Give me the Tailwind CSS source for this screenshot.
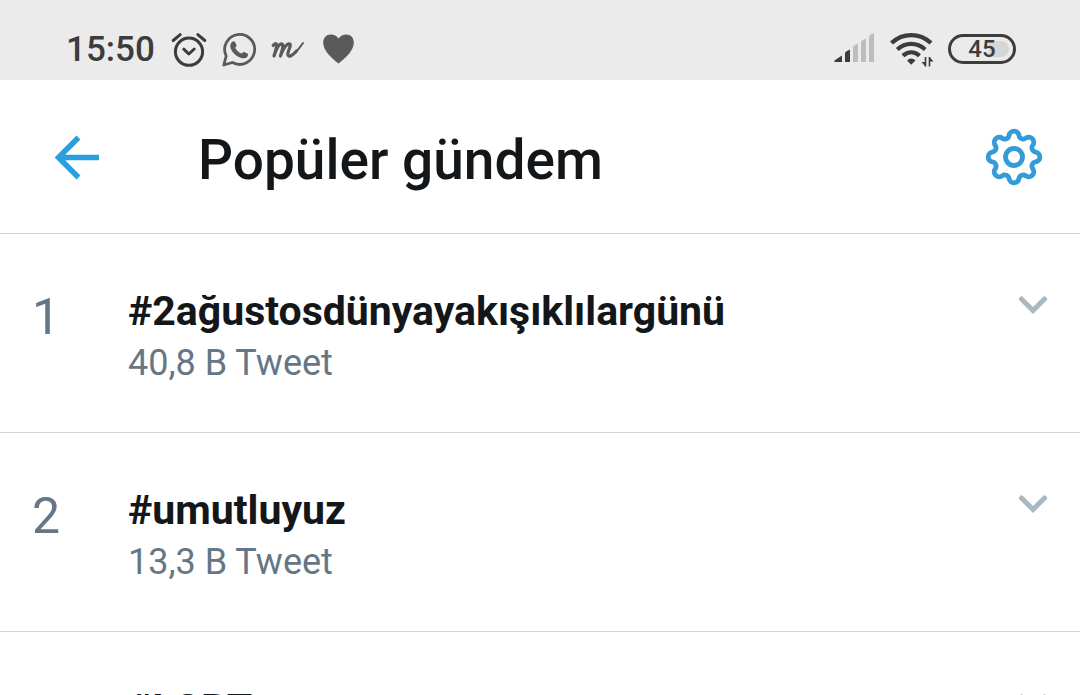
<!DOCTYPE html>
<html lang="tr">
<head>
    <meta charset="UTF-8">
    <meta name="viewport" content="width=device-width, initial-scale=1.0">
    <title>Popüler gündem</title>
    <script src="https://cdn.jsdelivr.net/npm/@tailwindcss/browser@4"></script>
</head>
<body class="h-screen overflow-hidden bg-white font-[Roboto,sans-serif] text-[#14171a]">
    <!-- Status bar -->
    <div class="flex h-20 items-end justify-between bg-[#ebebeb] pr-16 pl-[66px] pb-3 text-[#3c3c3c]">
        <div class="flex items-center">
            <span class="text-[35px] leading-9 font-medium">15:50</span>
            <!-- Alarm -->
            <svg class="ml-4 h-9 w-9" viewBox="0 0 36 36" fill="none" stroke="currentColor" stroke-width="3" stroke-linecap="round" stroke-linejoin="round">
                <circle cx="18" cy="19.7" r="13.6" />
                <path d="M2.200 8.500l7-5.800M33.800 8.500l-7-5.800M12.800 17.200l5 4.800 5.400-5" />
            </svg>
            <!-- WhatsApp -->
            <svg class="ml-3.5 h-9 w-9 text-[#5a5a5a]" viewBox="0 0 36 36" fill="none" stroke="currentColor" stroke-width="2.8" stroke-linejoin="round">
                <path d="M2.800 33l2.400-9A15 15 0 1 1 11.400 30.500z" />
                <path d="M10.900 10.100c1.200-1.200 2.600-1.200 3.200.1l1.400 3c.4 1-1 1.900-1.300 2.600 1.300 2.700 3.400 4.500 6.200 5.700.9-.3 1.700-1.900 2.800-1.500l3.200 1.500c1.200.7.7 2.500-.3 3.400-2.400 2.100-5.400 1.600-8.400.1-3.500-1.700-6.500-4.700-7.900-8.200-1-2.600-.6-5 1.100-6.700z" fill="currentColor" stroke="none" />
            </svg>
            <!-- App logo -->
            <svg class="ml-3 h-9 w-9 text-[#5a5a5a]" viewBox="0 0 36 36" fill="none" stroke="currentColor" stroke-width="3.200" stroke-linecap="round" stroke-linejoin="round">
                <path d="M4.200 13.500C6 11 8 11 7.700 13.800 7.300 17 5.800 21 5 24 6.800 18.500 9.500 11.800 12.400 11.800c3 0 .6 7-1 12.200C13.500 18.500 16.800 11.800 20 11.800c3.600 0-1.500 7.500-1.200 10.400.4 4 5 1.200 8.700-3.200" />
                <path d="M25 21.500Q29.500 18 34 11" stroke-width="2" />
            </svg>
            <!-- Heart -->
            <svg class="ml-4 h-9 w-9 text-[#5a5a5a]" viewBox="0 0 36 36" fill="currentColor">
                <path d="M17.500 6.500C19.500 3.800 22 2.600 25 2.600c5 0 7.800 3.400 7.800 8.200 0 7.500-7.500 15-15.300 20.700C9.700 25.800 2.200 18.300 2.200 10.800c0-4.800 3-8.200 7.800-8.200 3 0 5.700 1.200 7.500 3.900z" />
            </svg>
        </div>
        <div class="flex items-center pb-px">
            <!-- Signal -->
            <svg class="h-9 w-10" viewBox="0 2 40 36" fill="currentColor">
                <path d="M.5 33q-.6-1.500 1-2.300L8 26.500V33zM11 24l1-1.500 4-2V33h-5z" />
                <path d="M19 18l1-1.500 4-2V33h-5zM27 13l1-1.500 4-2V33h-5zM35 8q1-2.800 5-4V33h-5z" fill="#bdbdbd" />
            </svg>
            <!-- Wifi -->
            <svg class="ml-4 h-9 w-11" viewBox="0 2 44 36" fill="none" stroke="currentColor" stroke-width="4.300">
                <path d="M1.500 14C13 3.500 29.500 3.500 41 14M7.300 20.500C15.500 13 27 13 35.200 20.500M13 26.800c5-4.700 11.500-4.700 16.500 0" />
                <path d="M17 31.500c2.500-2.700 6-2.700 8.500 0l-4.300 4.200z" fill="currentColor" stroke="none" />
                <path d="M35.500 28v9.500M39.500 28v9.500" stroke-width="1.600" />
                <path d="M31.500 33h4v4.500zM39.500 28v4.500h4z" fill="currentColor" stroke="none" />
            </svg>
            <!-- Battery -->
            <div class="relative ml-3.5 flex h-[30px] w-[68px] items-center justify-center rounded-full border-3 border-[#3c3c3c]">
                <span class="absolute top-1 right-1 h-4 w-5 rounded-r-full bg-[#d6d6d6]"></span>
                <span class="relative text-[24px] leading-6 font-medium">45</span>
            </div>
        </div>
    </div>

    <!-- Title bar -->
    <header class="flex h-[154px] items-center border-b border-[#d0d5d6] pr-9 pl-[54px]">
        <button type="button" aria-label="Geri" class="text-[#2a9fe0]">
            <svg class="h-12 w-12" viewBox="0 0 48 48" fill="none" stroke="currentColor" stroke-width="5.500">
                <path d="M45 24.500H5M24.500 4.500l-20 20 20 20" />
            </svg>
        </button>
        <h1 class="ml-24 flex-1 pt-1.5 text-[55px] leading-16 font-medium">Popüler gündem</h1>
        <button type="button" aria-label="Ayarlar" class="text-[#339bd8]">
            <svg class="h-15 w-15" viewBox="-30 -30 60 60" fill="none" stroke="currentColor" stroke-width="4.800">
                <circle r="8.500" />
                <path d="M-4.940-21.630A5 5 0 0 1 4.940-21.630A4.300 4.300 0 0 0 11.800-18.790A5 5 0 0 1 18.790-11.800A4.300 4.300 0 0 0 21.630-4.940A5 5 0 0 1 21.630 4.940A4.300 4.300 0 0 0 18.790 11.800A5 5 0 0 1 11.800 18.790A4.300 4.300 0 0 0 4.940 21.630A5 5 0 0 1-4.940 21.630A4.300 4.300 0 0 0-11.800 18.790A5 5 0 0 1-18.790 11.800A4.300 4.300 0 0 0-21.630 4.940A5 5 0 0 1-21.630-4.940A4.300 4.300 0 0 0-18.790-11.800A5 5 0 0 1-11.800-18.790A4.300 4.300 0 0 0-4.940-21.630z" />
            </svg>
        </button>
    </header>

    <!-- Trend list -->
    <ol>
        <li class="flex h-[199px] items-start border-b border-[#d0d5d6] pt-[51px] pr-8 pl-8">
            <span class="w-24 pt-1 text-[50px] leading-14 text-[#657786]">1</span>
            <div class="flex-1">
                <h2 class="text-[41px] leading-[52px] font-bold">#2ağustosdünyayakışıklılargünü</h2>
                <p class="text-[36px] leading-[52px] text-[#657786]">40,8 B Tweet</p>
            </div>
            <button type="button" aria-label="Diğer seçenekler" class="pt-1 text-[#aab8c2]">
                <svg class="h-8 w-8" viewBox="0 0 32 32" fill="none" stroke="currentColor" stroke-width="5" stroke-linecap="round">
                    <path d="M5.500 10L17 21.500 28.500 10" />
                </svg>
            </button>
        </li>
        <li class="flex h-[199px] items-start border-b border-[#d0d5d6] pt-[51px] pr-8 pl-8">
            <span class="w-24 pt-1 text-[50px] leading-14 text-[#657786]">2</span>
            <div class="flex-1">
                <h2 class="text-[41px] leading-[52px] font-bold">#umutluyuz</h2>
                <p class="text-[36px] leading-[52px] text-[#657786]">13,3 B Tweet</p>
            </div>
            <button type="button" aria-label="Diğer seçenekler" class="pt-1 text-[#aab8c2]">
                <svg class="h-8 w-8" viewBox="0 0 32 32" fill="none" stroke="currentColor" stroke-width="5" stroke-linecap="round">
                    <path d="M5.500 10L17 21.500 28.500 10" />
                </svg>
            </button>
        </li>
        <li class="flex h-[199px] items-start border-b border-[#d0d5d6] pt-[51px] pr-8 pl-8">
            <span class="w-24 pt-1 text-[50px] leading-14 text-[#657786]">3</span>
            <div class="flex-1">
                <h2 class="text-[41px] leading-[52px] font-bold">#LGBT</h2>
            </div>
            <button type="button" aria-label="Diğer seçenekler" class="pt-1 text-[#aab8c2]">
                <svg class="h-8 w-8" viewBox="0 0 32 32" fill="none" stroke="currentColor" stroke-width="5" stroke-linecap="round">
                    <path d="M5.500 10L17 21.500 28.500 10" />
                </svg>
            </button>
        </li>
    </ol>
</body>
</html>
